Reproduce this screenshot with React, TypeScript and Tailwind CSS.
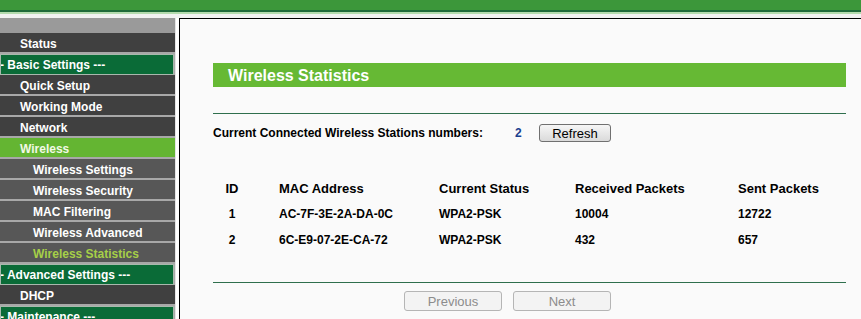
import React from "react";

type Item = { label: string; kind: "main" | "section" | "active" | "sub" | "subactive" };

const items: Item[] = [
  { label: "Status", kind: "main" },
  { label: "- Basic Settings ---", kind: "section" },
  { label: "Quick Setup", kind: "main" },
  { label: "Working Mode", kind: "main" },
  { label: "Network", kind: "main" },
  { label: "Wireless", kind: "active" },
  { label: "Wireless Settings", kind: "sub" },
  { label: "Wireless Security", kind: "sub" },
  { label: "MAC Filtering", kind: "sub" },
  { label: "Wireless Advanced", kind: "sub" },
  { label: "Wireless Statistics", kind: "subactive" },
  { label: "- Advanced Settings ---", kind: "section" },
  { label: "DHCP", kind: "main" },
  { label: "- Maintenance ---", kind: "section" },
];

function SideRow({ item }: { item: Item }) {
  if (item.kind === "section") {
    return (
      <div className="h-[21px] w-[174px] shrink-0 border border-[#a9b8ad] bg-[#0a6b37] flex items-center pt-[1px] text-[12px] font-bold text-white leading-none whitespace-nowrap overflow-hidden">
        <span className="-ml-[1px]">{item.label}</span>
      </div>
    );
  }
  const cls =
    item.kind === "main"
      ? "bg-[#404040] pl-[20px] text-white"
      : item.kind === "active"
      ? "bg-[#64b532] pl-[20px] text-[#f2f9e6]"
      : item.kind === "sub"
      ? "bg-[#575757] pl-[33px] text-white"
      : "bg-[#575757] pl-[33px] text-[#a6cf48]";
  return (
    <div className={`h-[19px] w-[175px] shrink-0 mb-[2px] flex items-center pt-[2px] text-[12px] font-bold leading-none whitespace-nowrap ${cls}`}>
      {item.label}
    </div>
  );
}

export default function App() {
  const rows = [
    { id: "1", mac: "AC-7F-3E-2A-DA-0C", status: "WPA2-PSK", rx: "10004", tx: "12722" },
    { id: "2", mac: "6C-E9-07-2E-CA-72", status: "WPA2-PSK", rx: "432", tx: "657" },
  ];
  return (
    <div
      className="w-[861px] h-[319px] overflow-hidden bg-[#f7f7f7] flex flex-col"
      style={{ fontFamily: '"Liberation Sans", Arial, sans-serif' }}
    >
      {/* top header */}
      <div className="h-[18px] shrink-0 flex flex-col">
        <div className="h-[10px] bg-[#3c973a]" />
        <div className="h-[2px] bg-[#1f6b3a]" />
        <div className="h-[2px] bg-[#b4dbae]" />
        <div className="flex-1 bg-[#f2f2f2]" />
      </div>
      <div className="flex flex-1 min-h-0">
        {/* sidebar */}
        <div className="w-[175px] shrink-0 bg-[#a8a8a8] flex flex-col overflow-hidden">
          <div className="h-[15px] shrink-0 bg-[#9a9a9a]" />
          {items.map((it) => (
            <SideRow key={it.label} item={it} />
          ))}
        </div>
        <div className="w-[1px] bg-[#e6e6e6]" />
        <div className="w-[3px] bg-white" />
        {/* content */}
        <div className="flex-1 border-l border-t border-black bg-[#fafafa] pl-[33px] pr-[15px] text-black">
          <div className="mt-[44px] h-[24px] bg-[#66b934] flex items-center pl-[15px] pt-[2px] text-[16px] font-bold text-white leading-none">
            Wireless Statistics
          </div>
          <div className="mt-[26px] h-[1px] bg-[#2f6f4d]" />
          <div className="mt-[10px] h-[18px] flex items-center text-[12px] font-bold leading-none">
            <span className="w-[302px]">Current Connected Wireless Stations numbers:</span>
            <span className="w-[24px] text-[#1b3f8f]">2</span>
            <button className="h-[18px] w-[72px] rounded-[3px] border border-[#707070] bg-gradient-to-b from-[#f6f6f6] to-[#dadada] text-[13px] font-normal leading-none text-black">
              Refresh
            </button>
          </div>
          <div className="mt-[33px]">
            <div className="h-[26px] flex items-center text-[13px] font-bold leading-none">
              <span className="w-[38px] text-center">ID</span>
              <span className="ml-[28px] w-[160px]">MAC Address</span>
              <span className="w-[136px]">Current Status</span>
              <span className="w-[163px]">Received Packets</span>
              <span>Sent Packets</span>
            </div>
            {rows.map((r) => (
              <div key={r.id} className="h-[26px] flex items-center text-[12px] font-bold leading-none">
                <span className="w-[38px] text-center">{r.id}</span>
                <span className="ml-[28px] w-[160px]">{r.mac}</span>
                <span className="w-[136px]">{r.status}</span>
                <span className="w-[163px]">{r.rx}</span>
                <span>{r.tx}</span>
              </div>
            ))}
          </div>
          <div className="mt-[29px] h-[1px] bg-[#2f6f4d]" />
          <div className="mt-[8px] flex gap-[11px] ml-[191px]">
            <button className="h-[20px] w-[98px] rounded-[3px] border border-[#b5b5b5] bg-[#f3f3f3] text-[13px] leading-none text-[#8c8c8c]">
              Previous
            </button>
            <button className="h-[20px] w-[98px] rounded-[3px] border border-[#b5b5b5] bg-[#f3f3f3] text-[13px] leading-none text-[#8c8c8c]">
              Next
            </button>
          </div>
        </div>
      </div>
    </div>
  );
}
